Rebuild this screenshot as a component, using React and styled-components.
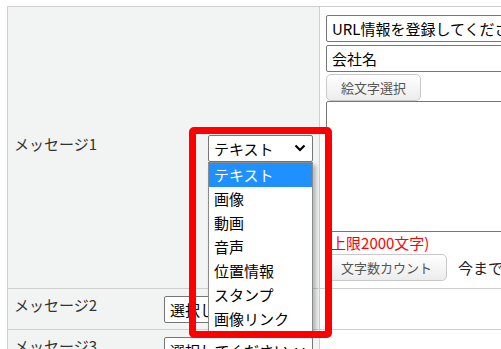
import styled, { createGlobalStyle } from 'styled-components';

const GlobalStyle = createGlobalStyle`
  body {
    margin: 0;
    background: #fff;
    font-family: "Noto Sans CJK JP", "Noto Sans", sans-serif;
    overflow: hidden;
  }
`

const Page = styled.div`
  width: 501px;
  height: 349px;
  overflow: hidden;
  padding: 6px 0 0 7px;
  box-sizing: border-box;
`

const Table = styled.div`
  width: 720px;
  border-top: 1px solid #cfcfcf;
  border-left: 1px solid #cfcfcf;
`

const Row = styled.div`
  display: grid;
  grid-template-columns: 312px 1fr;
  border-bottom: 1px solid #cfcfcf;
`

const Head = styled.div`
  background: #f2f4f3;
  border-right: 1px solid #cfcfcf;
  display: flex;
  align-items: center;
  justify-content: space-between;
  padding: 7px 6px 6px 6px;
`

const Label = styled.div`
  font-size: 15px;
  line-height: 18px;
  padding-bottom: 9px;
  color: #333;
`

const SelectWrap = styled.div`
  position: relative;
  width: ${(p) => p.$width}px;
`

const SelectBox = styled.div`
  display: flex;
  align-items: center;
  justify-content: space-between;
  height: 27px;
  box-sizing: border-box;
  border: 1px solid #767676;
  border-radius: 2px;
  background: #fff;
  padding: 0 6px 0 5px;
  font-size: 15px;
  color: #000;
  white-space: nowrap;
`

const OptionList = styled.ul`
  position: absolute;
  top: 100%;
  left: 0;
  width: 100%;
  box-sizing: border-box;
  margin: 0;
  padding: 0;
  list-style: none;
  background: #fff;
  border: 1px solid #8a8a8a;
  box-shadow: 3px 3px 4px rgba(0, 0, 0, 0.25);
  z-index: 5;
`

const Option = styled.li`
  height: 24px;
  line-height: 24px;
  padding-left: 5px;
  font-size: 15px;
  color: ${(p) => (p.$active ? '#fff' : '#000')};
  background: ${(p) => (p.$active ? '#1e90ff' : '#fff')};
`

const Highlight = styled.div`
  position: absolute;
  left: -19px;
  top: -8px;
  width: 143px;
  height: 211px;
  box-sizing: border-box;
  border: 7px solid #ff0000;
  border-radius: 5px;
  z-index: 6;
  pointer-events: none;
`

const Body = styled.div`
  display: flex;
  flex-direction: column;
  align-items: flex-start;
  padding: 8px 0 7px 6px;
  background: #fff;
`

const TextInput = styled.input`
  display: block;
  width: 420px;
  height: 27px;
  box-sizing: border-box;
  margin: 0 0 ${(p) => p.$gap || 0}px 0;
  padding: 0 5px;
  border: 1px solid #767676;
  border-radius: 2px;
  font-family: inherit;
  font-size: 15px;
  color: #000;
  background: #fff;
`

const Button = styled.button`
  height: 27px;
  box-sizing: border-box;
  padding: 0 14px;
  border: 1px solid #c9c9c9;
  border-radius: 5px;
  background: linear-gradient(#ffffff, #ececec);
  font-family: inherit;
  font-size: 13px;
  color: #555;
  white-space: nowrap;
`

const TextArea = styled.textarea`
  display: block;
  width: 420px;
  height: 131px;
  box-sizing: border-box;
  margin: 0;
  border: 1px solid #767676;
  border-radius: 2px;
  resize: none;
  font-family: inherit;
  font-size: 15px;
`

const Note = styled.div`
  font-size: 15px;
  line-height: 22px;
  color: #ff0000;
  white-space: nowrap;
`

const CountRow = styled.div`
  display: flex;
  align-items: center;
  gap: 11px;
  font-size: 15px;
  color: #222;
  white-space: nowrap;
`

const Chevron = () => (
  <svg width="12" height="8" viewBox="0 0 12 8">
    <path d="M1.5 1.5 L6 6 L10.5 1.5" stroke="#000" strokeWidth="2.2" fill="none" />
  </svg>
)

const types = ['テキスト', '画像', '動画', '音声', '位置情報', 'スタンプ', '画像リンク']

const App = () => {
  return (
    <Page>
      <GlobalStyle />
      <Table>
        <Row>
          <Head>
            <Label>メッセージ1</Label>
            <SelectWrap $width={105}>
              <SelectBox>
                <span>テキスト</span>
                <Chevron />
              </SelectBox>
              <OptionList>
                {types.map((t, i) => (
                  <Option key={t} $active={i === 0}>{t}</Option>
                ))}
              </OptionList>
              <Highlight />
            </SelectWrap>
          </Head>
          <Body>
            <TextInput $gap={3} readOnly value="URL情報を登録してください" />
            <TextInput $gap={2} readOnly value="会社名" />
            <Button>絵文字選択</Button>
            <TextArea readOnly />
            <Note>(上限2000文字)</Note>
            <CountRow>
              <Button>文字数カウント</Button>
              <span>今までの文字数：0文字</span>
            </CountRow>
          </Body>
        </Row>
        {[2, 3].map((n) => (
          <Row key={n}>
            <Head>
              <Label>メッセージ{n}</Label>
              <SelectWrap $width={149}>
                <SelectBox>
                  <span>選択してください</span>
                  <Chevron />
                </SelectBox>
              </SelectWrap>
            </Head>
            <Body />
          </Row>
        ))}
      </Table>
    </Page>
  )
}

export default App
